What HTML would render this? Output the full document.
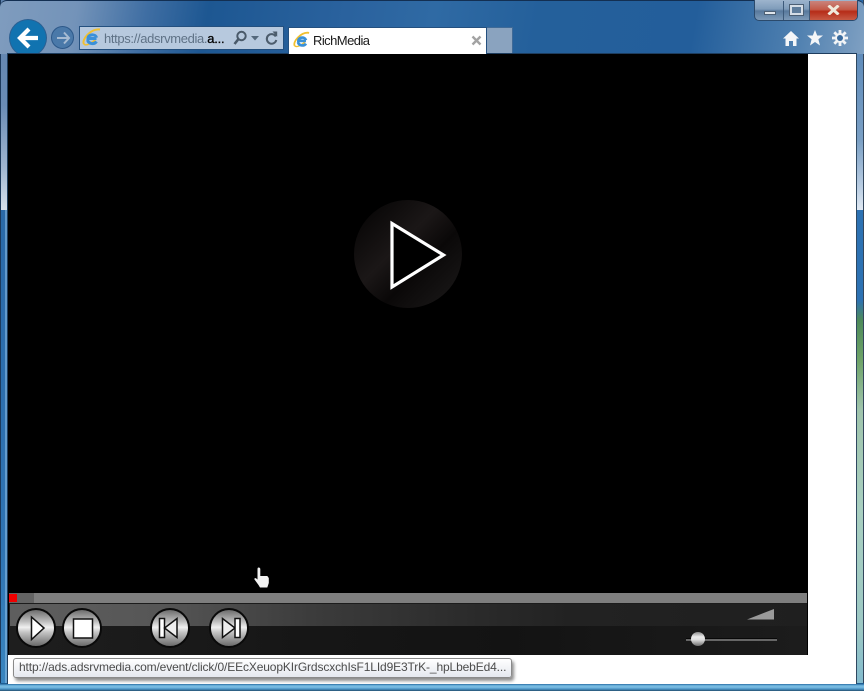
<!DOCTYPE html>
<html><head><meta charset="utf-8"><style>
html,body{margin:0;padding:0;background:#fff}
#r{position:relative;width:864px;height:691px;overflow:hidden;background:#fff;font-family:"Liberation Sans",sans-serif}
#r div,#r svg{position:absolute}
</style></head><body><div id="r">
<!-- frame -->
<div style="left:0;top:0;width:864px;height:691px;background:#2a68a6"></div>
<div style="left:0;top:0;width:8px;height:210px;background:linear-gradient(180deg,#5f83ae 0%,#6a8cb5 50%,#a0b6d1 80%,#d6e0ec 100%)"></div>
<div style="left:0;top:210px;width:7px;height:481px;background:linear-gradient(180deg,#2a69a8,#2f74b4 70%,#3a86c0)"></div>
<div style="left:857px;top:54px;width:7px;height:156px;background:linear-gradient(180deg,#5f8cbb,#7a9fc4 55%,#b9cde2 85%,#dfe8f2)"></div>
<div style="left:857px;top:210px;width:7px;height:481px;background:linear-gradient(180deg,#2d72b3 0,#2d72b3 90px,#4d8a5a 110px,#6ea368 150px,#9fc4ac 200px,#a8cfc0 300px,#9cc8c4 420px,#7fb9cf 481px)"></div>
<div style="left:0;top:0;width:1px;height:691px;background:#1d3a5c"></div>
<div style="left:863px;top:0;width:1px;height:691px;background:#33465c"></div>
<div style="left:5px;top:210px;width:2px;height:475px;background:#8fc0e6;opacity:.55"></div>
<div style="left:0;top:683px;width:864px;height:8px;background:linear-gradient(180deg,#1f5f93 0,#1f5f93 1px,#5da6d4 2px,#7fc0e4 4px,#4a94c6 6px,#24506f 8px)"></div>
<!-- title bar -->
<div style="left:0;top:0;width:864px;height:54px;border-radius:7px 7px 0 0;background:linear-gradient(100deg,#7f9cbe 0%,#7393b9 9%,#3f6ea3 17%,#1d5792 24%,#2a629e 40%,#2f6aa4 50%,#24609b 62%,#235e9b 80%,#4f80b0 92%,#7fa0c2 100%);border-top:1px solid #132f52;box-sizing:border-box"></div>
<!-- back button -->
<div style="left:10px;top:20px;width:36px;height:36px;border-radius:50%;background:#1173b0;box-shadow:0 0 0 1px #2b5f92"></div>
<!-- content -->
<div style="left:7px;top:53px;width:850px;height:631px;background:#fff;border-left:1px solid #1e3d5e;border-right:1px solid #2f4860;border-top:1px solid #1e3d5e;box-sizing:border-box"></div>
<div style="left:8px;top:54px;width:800px;height:601px;background:#000"></div>
<svg style="left:17px;top:26px" width="24" height="24" viewBox="0 0 24 24"><path d="M12 3 3 12l9 9M4 12h17" fill="none" stroke="#fff" stroke-width="4.200" stroke-linejoin="miter"/></svg>
<!-- forward button -->
<div style="left:51px;top:26px;width:23px;height:23px;border-radius:50%;background:#4a79a9;border:1px solid #2c5889;box-sizing:border-box"></div>
<svg style="left:55px;top:30px" width="16" height="16" viewBox="0 0 16 16"><path d="M9 2.500 14 8l-5 5.500M14 8H2" fill="none" stroke="#a6bbd2" stroke-width="2"/></svg>
<!-- address bar -->
<div style="left:79px;top:26px;width:205px;height:24px;background:#b7c9de;border:1px solid #24507f;box-sizing:border-box"></div>
<svg style="left:82px;top:28px" width="19" height="19" viewBox="0 0 19 19"><path d="M2 16C-1 12 9 0 18 1.500" fill="none" stroke="#f0c030" stroke-width="2"/><path d="M2 16c2 2.500 8-1 12-5" fill="none" stroke="#f0c030" stroke-width="1.600"/><path d="M14.500 10.500H6c0-4.500 7.500-5 8.500-.8M14.500 13.500c-2 3-7.500 3-9-1.500" fill="none" stroke="#3a90d8" stroke-width="3"/></svg>
<div style="left:104px;top:31px;font-size:13px;line-height:16px;color:#5f7286;white-space:nowrap;letter-spacing:-.35px">https://adsrvmedia.<span style="color:#000;letter-spacing:-.2px;-webkit-text-stroke:.3px #000">a...</span></div>
<svg style="left:232px;top:30px" width="16" height="16" viewBox="0 0 16 16"><circle cx="9.500" cy="6" r="4.200" fill="none" stroke="#4a5a6a" stroke-width="2"/><path d="M6.500 9 2.500 14" stroke="#4a5a6a" stroke-width="2.600"/></svg>
<svg style="left:251px;top:36px" width="8" height="5" viewBox="0 0 8 5"><path d="M0 0h8L4 4.500z" fill="#54687c"/></svg>
<svg style="left:265px;top:31px" width="13" height="15" viewBox="0 0 13 15"><path d="M10.800 5.500A4.800 4.800 0 1 0 11.300 9" fill="none" stroke="#4c5c6c" stroke-width="2"/><path d="M7.500 0.500h4.700v5.200z" fill="#4c5c6c"/></svg>
<!-- tab -->
<div style="left:288px;top:27px;width:199px;height:27px;background:#fff;border:1px solid #24507f;border-bottom:none;box-sizing:border-box"></div>
<div style="left:487px;top:27px;width:26px;height:26px;background:#8aa3bf;border-top:1px solid #3f6a97;border-right:1px solid #3f6a97;box-sizing:border-box"></div>
<svg style="left:293px;top:31px" width="17" height="18" viewBox="0 0 19 19"><path d="M2 16C-1 12 9 0 18 1.500" fill="none" stroke="#f0c030" stroke-width="2"/><path d="M2 16c2 2.500 8-1 12-5" fill="none" stroke="#f0c030" stroke-width="1.600"/><path d="M14.500 10.500H6c0-4.500 7.500-5 8.500-.8M14.500 13.500c-2 3-7.500 3-9-1.500" fill="none" stroke="#3a90d8" stroke-width="3"/></svg>
<div style="left:313px;top:33px;font-size:13px;line-height:16px;color:#1a1a1a;white-space:nowrap;letter-spacing:-.55px">RichMedia</div>
<svg style="left:471px;top:35px" width="11" height="11" viewBox="0 0 11 11"><path d="M1.500 1.500l8 8M9.500 1.500l-8 8" stroke="#a3a3a3" stroke-width="2.400"/></svg>
<!-- window buttons -->
<div style="left:754px;top:0;width:104px;height:21px;border:1px solid #2b4a6c;border-top:none;border-radius:0 0 5px 5px;box-sizing:border-box;overflow:hidden;background:linear-gradient(180deg,#9db4cd,#7f9cba 45%,#58799d 55%,#7d9ab8)"></div>
<div style="left:810px;top:1px;width:47px;height:19px;border-radius:0 0 4px 0;background:linear-gradient(180deg,#c9847c,#c45a48 45%,#b62c18 55%,#c75a45)"></div>
<div style="left:783px;top:1px;width:1px;height:19px;background:#3d5a7a"></div>
<div style="left:809px;top:1px;width:1px;height:19px;background:#3d5a7a"></div>
<div style="left:764px;top:11px;width:12px;height:4px;background:#e0e6ec;border:1px solid #4c5f74;box-sizing:border-box"></div>
<div style="left:790px;top:5px;width:13px;height:10px;border:2px solid #d5dde6;outline:1px solid #4c5f74;box-sizing:border-box;background:#5f7d9c"></div>
<svg style="left:827px;top:5px" width="13" height="10" viewBox="0 0 13 10"><path d="M1.500 .5l10 9M11.500 .5l-10 9" stroke="#efe9dc" stroke-width="3"/></svg>
<!-- home star gear -->
<svg style="left:783px;top:31px" width="16" height="15" viewBox="0 0 16 15"><path d="M8 0 0 7.500h2.500V15H6v-5h4v5h3.500V7.500H16z" fill="#f4f6f8"/></svg>
<svg style="left:807px;top:30px" width="16" height="16" viewBox="0 0 16 16"><path d="M8 0l2.200 5.500H16l-4.600 3.700L13 15.500 8 12 3 15.500l1.600-6.300L0 5.500h5.800z" fill="#f4f6f8"/></svg>
<svg style="left:832px;top:30px" width="16" height="16" viewBox="0 0 16 16"><g stroke="#f2f4f6" stroke-width="2.800"><path d="M8 0v16M0 8h16M2.300 2.300l11.400 11.400M13.700 2.300 2.300 13.700"/></g><circle cx="8" cy="8" r="5" fill="#f2f4f6"/><circle cx="8" cy="8" r="3" fill="#3a6c9f"/></svg>
<!-- big play -->
<div style="left:354px;top:200px;width:108px;height:108px;border-radius:50%;background:linear-gradient(135deg,#0b0909 15%,#1b1717 42%,#0a0808 62%,#181616 90%)"></div>
<svg style="left:385px;top:216px" width="66" height="78" viewBox="0 0 66 78"><path d="M7 7.500V71L58.500 39z" fill="#000" stroke="#fff" stroke-width="3.200"/></svg>
<!-- cursor -->
<svg style="left:254px;top:567px" width="16" height="22" viewBox="0 0 16 22"><path d="M4.500 .5c1 0 1.800.6 1.800 1.600V9h7l1.500 2v5l-1.500 4.500H6L4.500 18 .5 12.500c-.5-1 .5-1.800 1.500-1.200l1.500 1.200V2c0-1 .5-1.500 1-1.500z" fill="#f2f2f2"/></svg>
<!-- progress -->
<div style="left:9px;top:593px;width:798px;height:10px;background:#7e7e7e"></div>
<div style="left:9px;top:593px;width:25px;height:10px;background:#646464"></div>
<div style="left:9px;top:594px;width:8px;height:8px;background:#f00000"></div>
<!-- controls -->
<div style="left:9px;top:603px;width:798px;height:52px;background:#1c1c1c"></div>
<div style="left:10px;top:604px;width:797px;height:22px;background:linear-gradient(90deg,#5e5e5e 0,#565656 150px,#3c3c3c 300px,#2c2c2c 450px,#222 560px,#1f1f1f 100%)"></div>
<div style="left:9px;top:626px;width:798px;height:29px;background:linear-gradient(90deg,#1e1e1e,#161616 300px,#131313 500px,#1c1c1c 100%)"></div>
<!-- buttons -->
<div style="left:16px;top:608px;width:40px;height:40px;border-radius:50%;border:2.500px solid #0a0a0a;box-sizing:border-box;background:linear-gradient(180deg,#6d6d6d 0%,#bdbdbd 32%,#f0f0f0 48%,#c4c4c4 62%,#6a6a6a 100%)"></div>
<div style="left:62px;top:608px;width:40px;height:40px;border-radius:50%;border:2.500px solid #0a0a0a;box-sizing:border-box;background:linear-gradient(180deg,#6d6d6d 0%,#bdbdbd 32%,#f0f0f0 48%,#c4c4c4 62%,#6a6a6a 100%)"></div>
<div style="left:150px;top:608px;width:40px;height:40px;border-radius:50%;border:2.500px solid #0a0a0a;box-sizing:border-box;background:linear-gradient(180deg,#6d6d6d 0%,#bdbdbd 32%,#f0f0f0 48%,#c4c4c4 62%,#6a6a6a 100%)"></div>
<div style="left:209px;top:608px;width:40px;height:40px;border-radius:50%;border:2.500px solid #0a0a0a;box-sizing:border-box;background:linear-gradient(180deg,#6d6d6d 0%,#bdbdbd 32%,#f0f0f0 48%,#c4c4c4 62%,#6a6a6a 100%)"></div>
<svg style="left:16px;top:608px" width="240" height="40" viewBox="0 0 240 40"><path d="M15.500 9V31.500L28 20z" fill="#fff" stroke="#111" stroke-width="1.500"/><rect x="57.500" y="11" width="19" height="19" fill="#fff" stroke="#111" stroke-width="1.500"/><rect x="143.500" y="10.500" width="5" height="19" fill="#fff" stroke="#111" stroke-width="1.500"/><path d="M161 10.500v19l-12.500-9.500z" fill="#eee" stroke="#111" stroke-width="1.500"/><path d="M206.500 10.500v19l12.500-9.500z" fill="#eee" stroke="#111" stroke-width="1.500"/><rect x="219" y="10.500" width="5" height="19" fill="#fff" stroke="#111" stroke-width="1.500"/></svg>
<!-- volume -->
<svg style="left:747px;top:609px" width="28" height="11" viewBox="0 0 28 11"><path d="M0 10.500 27 0v10.500z" fill="#9a9a9a"/></svg>
<div style="left:686px;top:639px;width:91px;height:2px;background:#666;box-shadow:0 -1px 0 #080808"></div>
<div style="left:691px;top:632px;width:14px;height:14px;border-radius:50%;background:linear-gradient(180deg,#8c8c8c 0%,#ececec 35%,#dedede 55%,#6e6e6e 100%)"></div>
<!-- tooltip -->
<div style="left:13px;top:658px;width:499px;height:20px;border:1px solid #8a8a8a;border-radius:3px;box-sizing:border-box;background:linear-gradient(180deg,#fff,#e5e8ef);box-shadow:2px 3px 3px rgba(0,0,0,.45)"></div>
<div style="left:19px;top:660px;font-size:12px;line-height:15px;color:#4c4c4c;white-space:nowrap;letter-spacing:-.13px">http://ads.adsrvmedia.com/event/click/0/EEcXeuopKIrGrdscxchIsF1LId9E3TrK-_hpLbebEd4...</div>
</div></body></html>
